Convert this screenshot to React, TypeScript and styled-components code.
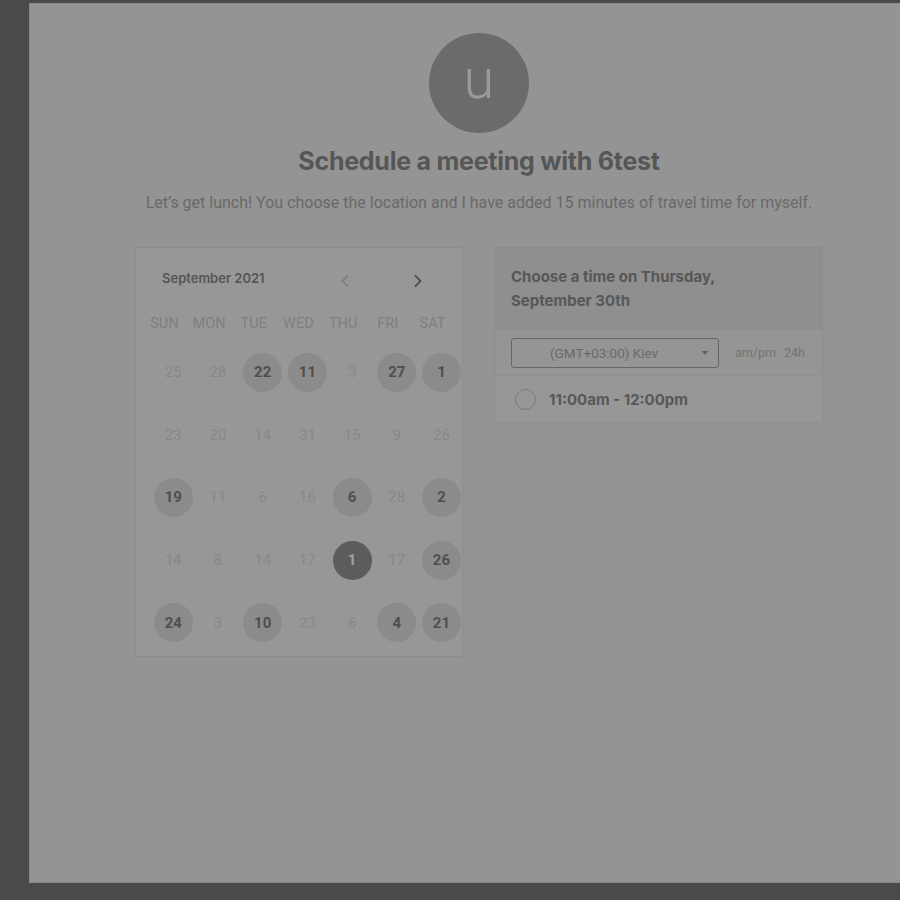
import React from "react";
import styled, { createGlobalStyle } from "styled-components";

const Global = createGlobalStyle`
  html, body { margin: 0; padding: 0; background: #4a4a4a; overflow: hidden; }
  body { font-family: Roboto, "Liberation Sans", sans-serif; }
`;

const Panel = styled.div`
  margin: 3px 0 0 29px;
  width: 900px;
  height: 880px;
  background: #949494;
  border: 1px solid #8a8a8a;
  box-sizing: border-box;
  display: flex;
  flex-direction: column;
  align-items: center;
`;

const Avatar = styled.div`
  margin-top: 29px;
  width: 100px;
  height: 100px;
  border-radius: 50%;
  background: #6b6b6b;
  color: #9b9b9b;
  font-family: Roboto, sans-serif;
  font-size: 56px;
  font-weight: 300;
  display: flex;
  align-items: center;
  justify-content: center;
  line-height: 1;
  padding-bottom: 8px;
  box-sizing: border-box;
`;

const Title = styled.h1`
  margin: 13px 0 0;
  font-family: Inter, sans-serif;
  font-weight: 700;
  font-size: 25px;
  line-height: 30px;
  color: #565656;
  letter-spacing: -0.25px;
`;

const Subtitle = styled.p`
  margin: 16px 0 0;
  font-family: Roboto, sans-serif;
  font-size: 16px;
  line-height: 22px;
  color: #696969;
`;

const Cards = styled.div`
  margin-top: 33px;
  display: flex;
  gap: 31px;
  align-items: flex-start;
`;

const Card = styled.div<{ $w: number }>`
  width: ${(p) => p.$w}px;
  background: #979797;
  border: 1px solid #8d8d8d;
  box-sizing: border-box;
  overflow: hidden;
`;

const CalHeader = styled.div`
  display: flex;
  align-items: center;
  height: 62px;
  padding: 0 0 0 26px;
`;

const Month = styled.div`
  flex: 0 0 178px;
  font-family: Inter, sans-serif;
  font-weight: 600;
  font-size: 13px;
  color: #555;
  margin-top: -3px;
`;

const Chevron = styled.span<{ $faded?: boolean }>`
  flex: 0 0 73px;
  display: flex;
  color: ${(p) => (p.$faded ? "#808080" : "#4e4e4e")};
  margin-top: 3px;
`;

const Grid = styled.div<{ $left: number }>`
  display: grid;
  grid-template-columns: repeat(7, 44.7px);
  margin-left: ${(p) => p.$left}px;
`;

const DayName = styled.div`
  height: 26px;
  display: flex;
  align-items: center;
  justify-content: center;
  font-size: 14.5px;
  color: #7f7f7f;
`;

const Cell = styled.div`
  height: 62.6px;
  display: flex;
  align-items: center;
  justify-content: center;
`;

const Day = styled.div<{ $kind: "faded" | "avail" | "sel" }>`
  width: 39px;
  height: 39px;
  border-radius: 50%;
  display: flex;
  align-items: center;
  justify-content: center;
  font-family: Roboto, sans-serif;
  font-size: 15px;
  font-weight: ${(p) => (p.$kind === "faded" ? 400 : 700)};
  background: ${(p) =>
    p.$kind === "avail" ? "#8b8b8b" : p.$kind === "sel" ? "#5c5c5c" : "transparent"};
  color: ${(p) =>
    p.$kind === "faded" ? "#888888" : p.$kind === "sel" ? "#a2a2a2" : "#4f4f4f"};
`;

const DayRows = styled.div`
  margin-top: 5px;
  padding-bottom: 2px;
`;

const TimeHeader = styled.div`
  background: #8f8f8f;
  padding: 17px 16px 16px;
  font-family: Inter, sans-serif;
  font-weight: 700;
  font-size: 15px;
  line-height: 24px;
  color: #575757;
  border-bottom: 1px solid #8c8c8c;
`;

const Controls = styled.div`
  display: flex;
  align-items: center;
  height: 45px;
  padding: 0 16px;
  gap: 16px;
  border-bottom: 1px solid #8f8f8f;
  background: #959595;
`;

const Select = styled.div`
  width: 208px;
  height: 30px;
  box-sizing: border-box;
  border: 1px solid #666;
  border-radius: 3px;
  display: flex;
  align-items: center;
  padding: 0 10px 0 38px;
  font-size: 13.5px;
  color: #6a6a6a;
`;

const SelectText = styled.span`
  flex: 1;
`;

const Caret = styled.span`
  width: 0;
  height: 0;
  border-left: 3.5px solid transparent;
  border-right: 3.5px solid transparent;
  border-top: 4px solid #5f5f5f;
`;

const Formats = styled.div`
  display: flex;
  gap: 8px;
  font-size: 12.5px;
  color: #737373;
`;

const Slot = styled.div`
  display: flex;
  align-items: center;
  height: 46px;
  padding: 0 0 0 20px;
  gap: 13px;
  font-family: Inter, sans-serif;
  font-weight: 700;
  font-size: 15px;
  color: #575757;
`;

const Radio = styled.span`
  width: 21px;
  height: 21px;
  border-radius: 50%;
  border: 1.5px solid #7a7a7a;
  box-sizing: border-box;
`;

type Kind = "faded" | "avail" | "sel";
const rows: [number, Kind][][] = [
  [[25, "faded"], [28, "faded"], [22, "avail"], [11, "avail"], [3, "faded"], [27, "avail"], [1, "avail"]],
  [[23, "faded"], [20, "faded"], [14, "faded"], [31, "faded"], [15, "faded"], [9, "faded"], [26, "faded"]],
  [[19, "avail"], [11, "faded"], [6, "faded"], [16, "faded"], [6, "avail"], [28, "faded"], [2, "avail"]],
  [[14, "faded"], [8, "faded"], [14, "faded"], [17, "faded"], [1, "sel"], [17, "faded"], [26, "avail"]],
  [[24, "avail"], [3, "faded"], [10, "avail"], [23, "faded"], [6, "faded"], [4, "avail"], [21, "avail"]],
];

const days = ["SUN", "MON", "TUE", "WED", "THU", "FRI", "SAT"];

const ChevronIcon = ({ dir }: { dir: "l" | "r" }) => (
  <svg width="10" height="14" viewBox="0 0 10 14" fill="none">
    <path
      d={dir === "l" ? "M7.5 2 L2.5 7 L7.5 12" : "M2.5 2 L7.5 7 L2.5 12"}
      stroke="currentColor"
      strokeWidth="1.8"
      strokeLinecap="round"
      strokeLinejoin="round"
    />
  </svg>
);

export default function App() {
  return (
    <>
      <Global />
      <Panel>
        <Avatar>u</Avatar>
        <Title>Schedule a meeting with 6test</Title>
        <Subtitle>
          Let’s get lunch! You choose the location and I have added 15 minutes of travel time for myself.
        </Subtitle>
        <Cards>
          <Card $w={328}>
            <CalHeader>
              <Month>September 2021</Month>
              <Chevron $faded>
                <ChevronIcon dir="l" />
              </Chevron>
              <Chevron>
                <ChevronIcon dir="r" />
              </Chevron>
            </CalHeader>
            <Grid $left={6}>
              {days.map((d) => (
                <DayName key={d}>{d}</DayName>
              ))}
            </Grid>
            <DayRows>
              <Grid $left={15}>
                {rows.flat().map(([n, k], i) => (
                  <Cell key={i}>
                    <Day $kind={k}>{n}</Day>
                  </Cell>
                ))}
              </Grid>
            </DayRows>
          </Card>
          <Card $w={329}>
            <TimeHeader>
              Choose a time on Thursday,
              <br />
              September 30th
            </TimeHeader>
            <Controls>
              <Select>
                <SelectText>(GMT+03:00) Kiev</SelectText>
                <Caret />
              </Select>
              <Formats>
                <span>am/pm</span>
                <span>24h</span>
              </Formats>
            </Controls>
            <Slot>
              <Radio />
              11:00am - 12:00pm
            </Slot>
          </Card>
        </Cards>
      </Panel>
    </>
  );
}
